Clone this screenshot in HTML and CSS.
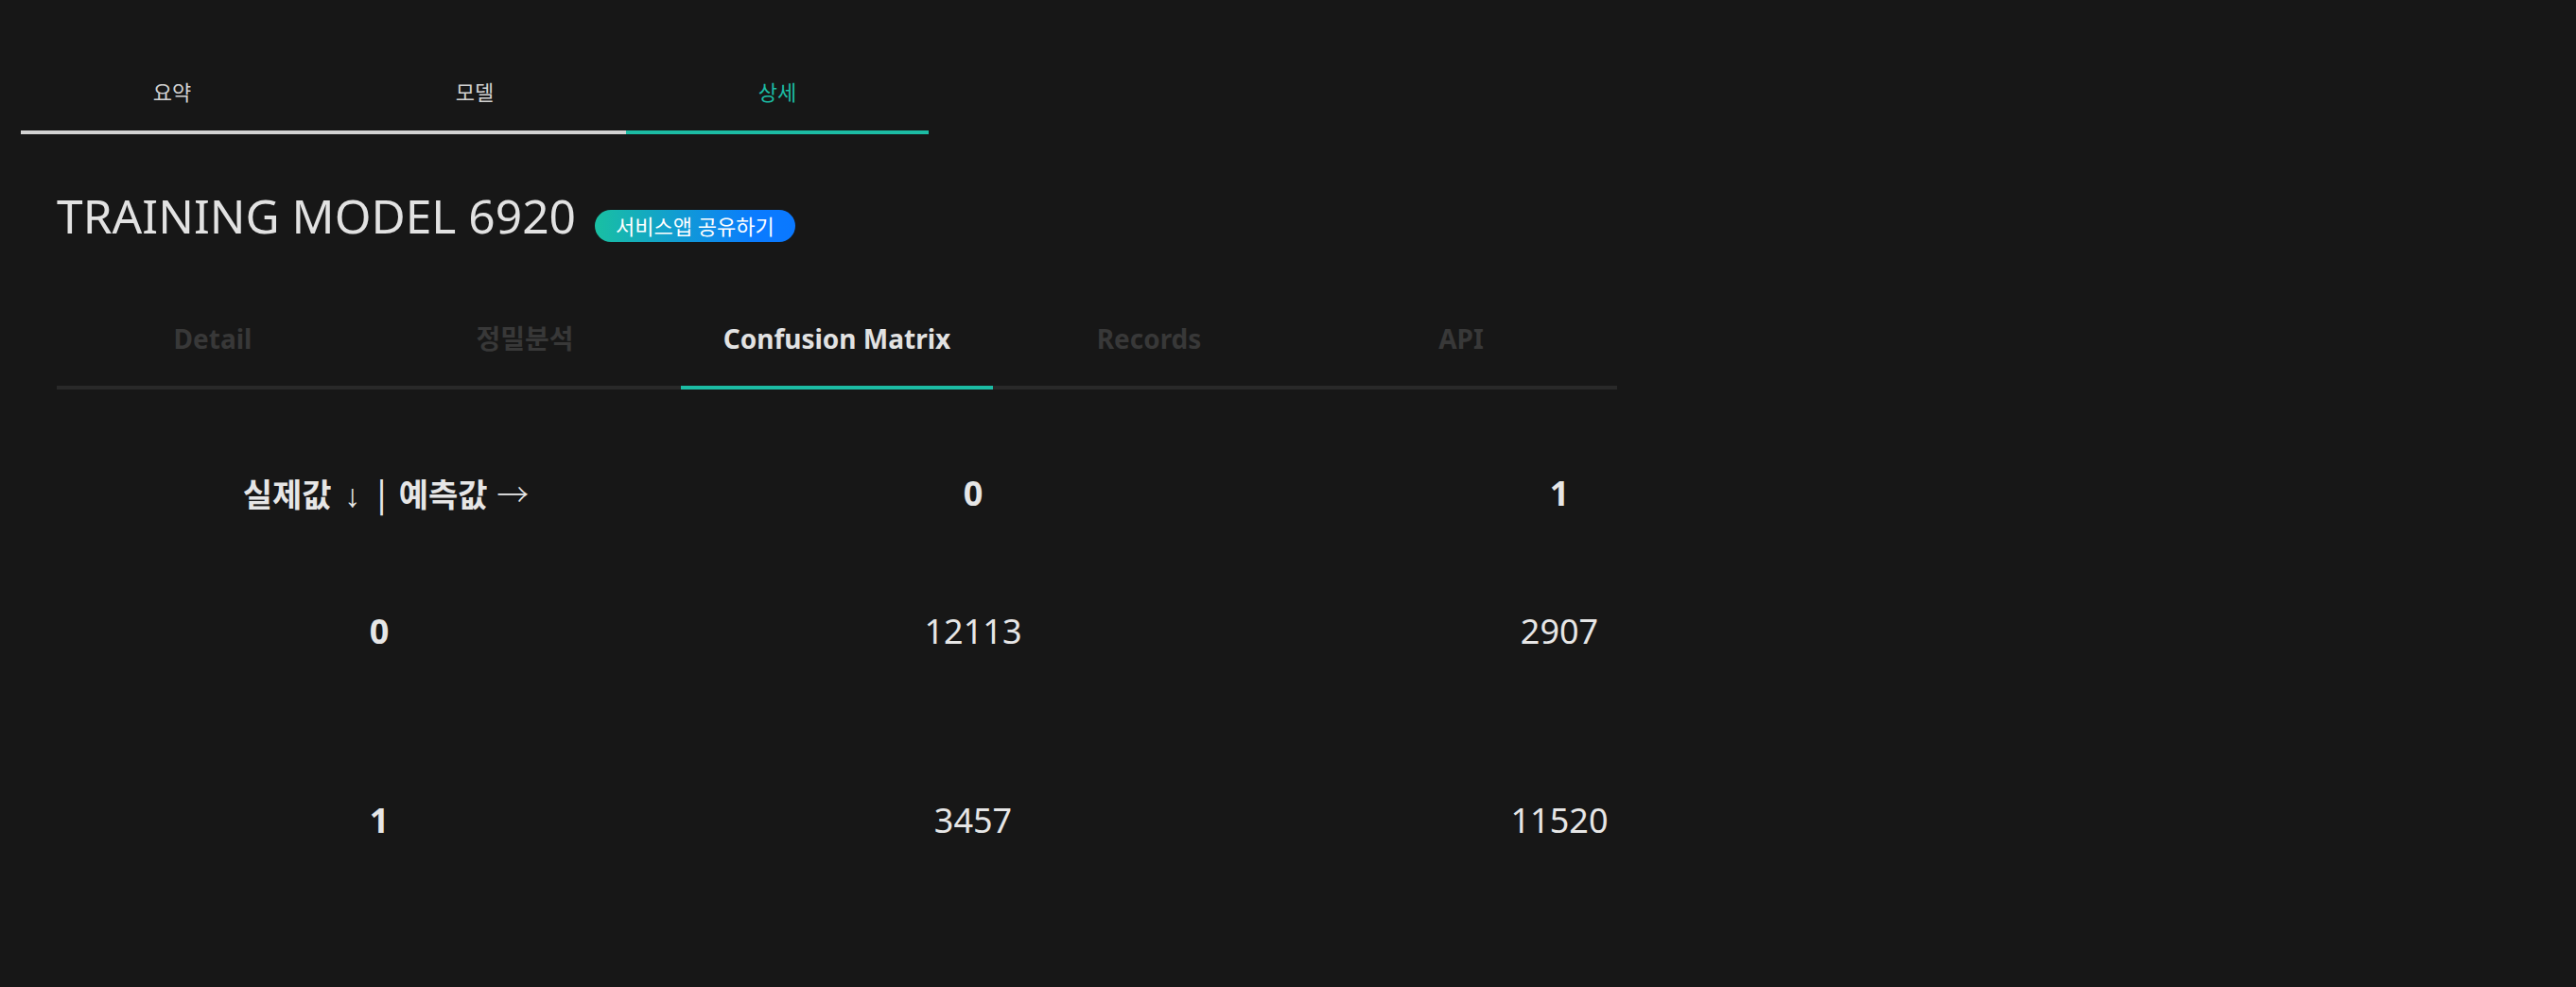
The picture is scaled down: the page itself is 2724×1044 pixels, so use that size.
FILE: index.html
```html
<!DOCTYPE html>
<html lang="ko">
<head>
<meta charset="utf-8">
<title>Training Model 6920</title>
<link rel="stylesheet" href="styles.css">
</head>
<body>
<div class="page">
  <nav class="top-tabs">
    <div class="top-tab">요약</div>
    <div class="top-tab">모델</div>
    <div class="top-tab is-active">상세</div>
  </nav>
  <main class="content">
    <header class="title-row">
      <h1 class="title">TRAINING MODEL 6920</h1>
      <span class="badge">서비스앱 공유하기</span>
    </header>
    <nav class="sub-tabs">
      <div class="sub-tab">Detail</div>
      <div class="sub-tab">정밀분석</div>
      <div class="sub-tab is-active">Confusion Matrix</div>
      <div class="sub-tab">Records</div>
      <div class="sub-tab">API</div>
    </nav>
    <section class="matrix">
      <div class="cell head corner"><span>실제값 <span class="sym down">↓</span> <span class="bar">|</span> 예측값 <span class="sym">→</span></span></div>
      <div class="cell head">0</div>
      <div class="cell head">1</div>
      <div class="cell head">0</div>
      <div class="cell">12113</div>
      <div class="cell">2907</div>
      <div class="cell head">1</div>
      <div class="cell">3457</div>
      <div class="cell">11520</div>
    </section>
  </main>
</div>
</body>
</html>
```
FILE: styles.css
```css
html, body {
  margin: 0;
  padding: 0;
  background: #171717;
}
body {
  font-family: "Noto Sans", "Noto Sans CJK KR", sans-serif;
  color: #e2e2e2;
  min-height: 1044px;
}
.top-tabs {
  display: flex;
  width: 960px;
  margin-left: 22px;
}
.top-tab {
  flex: 1;
  text-align: center;
  font-size: 22px;
  line-height: 30px;
  padding-top: 82px;
  padding-bottom: 26px;
  color: #d2d2d2;
  border-bottom: 4px solid #d2d2d2;
}
.top-tab.is-active {
  color: #1cbca4;
  border-bottom-color: #1cbca4;
}
.content {
  padding-left: 60px;
  width: 1650px;
}
.title-row {
  display: flex;
  align-items: flex-start;
  gap: 20px;
  margin-top: 62px;
}
.title {
  margin: 0;
  font-size: 49.7px;
  line-height: 49px;
  font-weight: 400;
  color: #e2e2e2;
}
.badge {
  margin-top: 18px;
  height: 34px;
  line-height: 34px;
  padding: 0 22px;
  border-radius: 17px;
  font-size: 22px;
  color: #ffffff;
  background: linear-gradient(90deg, #19c0a2 0%, #0a7bff 80%, #0a78ff 100%);
  white-space: nowrap;
}
.sub-tabs {
  display: flex;
  margin-top: 82px;
}
.sub-tab {
  flex: 1;
  text-align: center;
  font-size: 28px;
  font-weight: 700;
  line-height: 40px;
  padding-bottom: 30px;
  color: #383838;
  border-bottom: 4px solid #292929;
}
.sub-tab.is-active {
  color: #e2e2e2;
  border-bottom-color: #1cbca4;
}
.matrix {
  display: grid;
  grid-template-columns: 636px 620px 620px;
  grid-template-rows: 92px 200px 200px;
  margin-top: 63px;
  margin-left: 23px;
}
.cell {
  display: flex;
  align-items: center;
  justify-content: center;
  font-size: 36px;
  font-weight: 400;
  color: #e6e6e6;
}
.cell.head {
  font-weight: 700;
}
.cell.corner {
  font-family: "Noto Sans CJK KR", sans-serif;
  font-size: 34px;
  white-space: nowrap;
  padding-left: 14px;
}
.sym {
  font-weight: 300;
}
.sym.down {
  font-family: "Liberation Sans", sans-serif;
  font-weight: 400;
  padding: 0 4px;
}
.bar {
  font-weight: 500;
  padding: 0 4px;
}
```
